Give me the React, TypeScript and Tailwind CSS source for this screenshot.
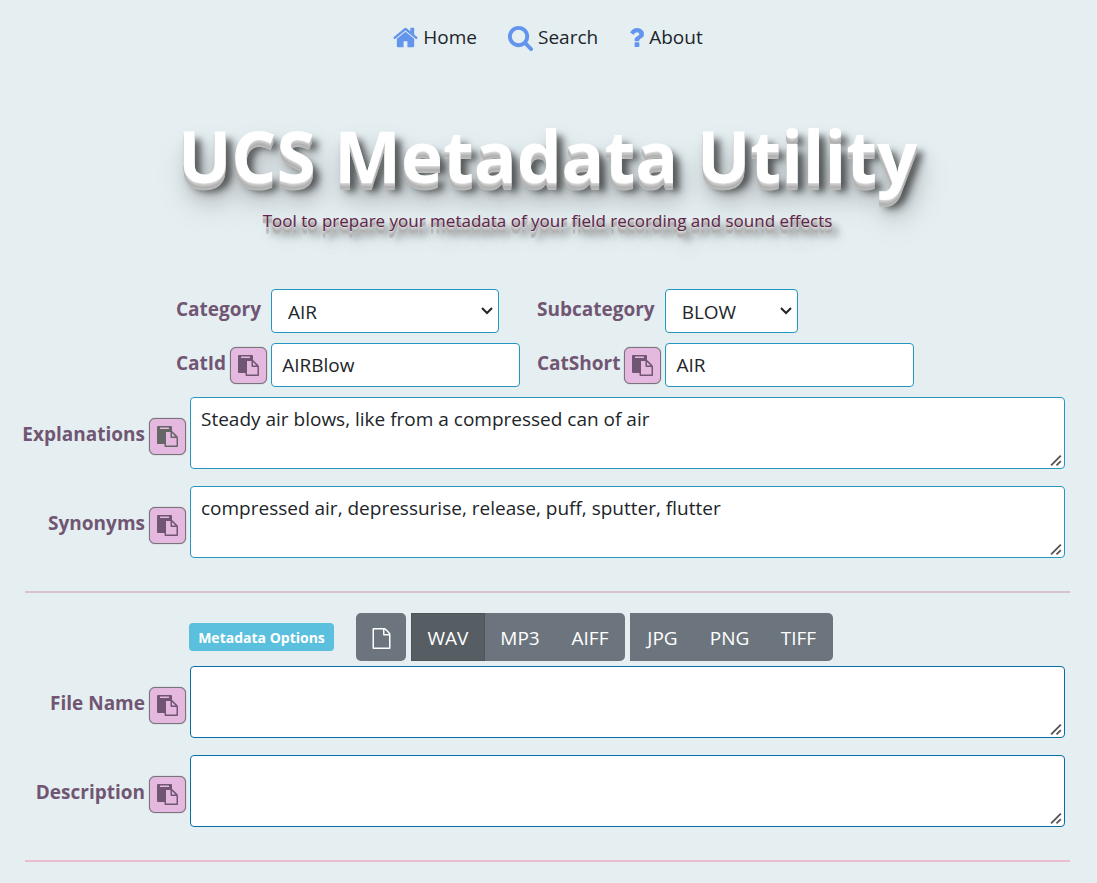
import type { ReactNode } from "react";

const ICONS = {
  home: "M1472 992v480q0 26-19 45t-45 19h-384v-384h-256v384h-384q-26 0-45-19t-19-45v-480q0-1 .5-3t.5-3l575-474 575 474q1 2 1 6zm223-69l-62 74q-8 9-21 11h-3q-13 0-21-7l-692-577-692 577q-12 8-24 7-13-2-21-11l-62-74q-8-10-7-23.5t11-21.5l719-599q32-26 76-26t76 26l244 204v-195q0-14 9-23t23-9h192q14 0 23 9t9 23v408l219 182q10 8 11 21.5t-7 23.5z",
  search:
    "M1216 832q0-185-131.5-316.5t-316.5-131.5-316.5 131.5-131.5 316.5 131.5 316.5 316.5 131.5 316.5-131.5 131.5-316.5zm512 832q0 52-38 90t-90 38q-54 0-90-38l-343-342q-179 124-399 124-143 0-273.5-55.5t-225-150-150-225-55.5-273.5 55.5-273.5 150-225 225-150 273.5-55.5 273.5 55.5 225 150 150 225 55.5 273.5q0 220-124 399l343 343q37 37 37 90z",
  question:
    "M1088 1256v240q0 16-12 28t-28 12h-240q-16 0-28-12t-12-28v-240q0-16 12-28t28-12h240q16 0 28 12t12 28zm316-600q0 54-15.5 101t-35 76.5-55 59.5-57.5 43.5-61 35.5q-41 23-68.5 65t-27.5 67q0 17-12 32.5t-28 15.5h-240q-15 0-25.5-18.5t-10.5-37.5v-45q0-83 65-156.5t143-108.5q59-27 84-56t25-76q0-42-46.5-74t-107.5-32q-65 0-108 29-35 25-107 115-13 16-31 16-12 0-25-8l-164-125q-13-10-15.5-25t5.5-28q160-266 464-266 80 0 161 31t146 83 106 127.5 41 158.5z",
  paste:
    "M768 1664h896v-640h-416q-40 0-68-28t-28-68v-416h-384v1152zm256-1440v-64q0-13-9.5-22.5t-22.5-9.5h-704q-13 0-22.5 9.5t-9.5 22.5v64q0 13 9.5 22.5t22.5 9.5h704q13 0 22.5-9.5t9.5-22.5zm256 672h299l-299-299v299zm512 128v672q0 40-28 68t-68 28h-960q-40 0-68-28t-28-68v-160h-544q-40 0-68-28t-28-68v-1344q0-40 28-68t68-28h1088q40 0 68 28t28 68v328q21 13 36 28l408 408q28 28 48 76t20 88z",
  file: "M1596 380q28 28 48 76t20 88v1152q0 40-28 68t-68 28h-1344q-40 0-68-28t-28-68v-1600q0-40 28-68t68-28h896q40 0 88 20t76 48zm-444-244v376h376q-10-29-22-41l-313-313q-12-12-41-22zm384 1528v-1024h-416q-40 0-68-28t-28-68v-416h-768v1536h1280z",
};

function Icon({ name, className, viewBox = "0 0 1792 1792" }: { name: keyof typeof ICONS; className: string; viewBox?: string }) {
  return (
    <svg viewBox={viewBox} className={className} fill="currentColor" aria-hidden="true">
      <path d={ICONS[name]} />
    </svg>
  );
}

function CopyButton({ label, gray }: { label: string; gray?: boolean }) {
  return (
    <button
      type="button"
      aria-label={`Copy ${label}`}
      className={`flex size-[37px] shrink-0 items-center justify-center rounded-md border border-[#77747a] bg-[#e5b8df] shadow-[0_0_1px_#77747a] ${gray ? "text-[#666]" : "text-[#715673]"}`}
    >
      <Icon name="paste" className="size-[21px]" />
    </button>
  );
}

const LABEL = "text-[19px] leading-[30px] font-bold text-[#715673]";
const FIELD = "rounded-[4px] border border-[#2596be] bg-white text-[#212529]";

function NavLink({ children, href }: { children: ReactNode; href: string }) {
  return (
    <a href={href} className="flex items-center gap-1 text-[#212529]">
      {children}
    </a>
  );
}

function SelectField({ id, label, value, size }: { id: string; label: string; value: string; size: string }) {
  return (
    <div className="flex items-start gap-[10px]">
      <label htmlFor={id} className={`${LABEL} pt-[5px]`}>
        {label}
      </label>
      <div className={`relative ${size}`}>
        <select id={id} className={`${FIELD} h-11 w-full appearance-none pt-[3px] pl-4`}>
          <option>{value}</option>
        </select>
        <svg viewBox="0 0 12 8" className="pointer-events-none absolute top-[18px] right-[6px] h-2 w-3" fill="none" stroke="#212529" strokeWidth="2" aria-hidden="true">
          <path d="M1 1l5 5 5-5" />
        </svg>
      </div>
    </div>
  );
}

function TextField({ id, label, value }: { id: string; label: string; value: string }) {
  return (
    <div className="flex items-start gap-1">
      <label htmlFor={id} className={`${LABEL} pt-[5px]`}>
        {label}
      </label>
      <div className="pt-[4px]">
        <CopyButton label={label} />
      </div>
      <input id={id} defaultValue={value} className={`${FIELD} h-11 min-w-0 grow px-[10px]`} />
    </div>
  );
}

function AreaField({ id, label, value, dark, gray }: { id: string; label: string; value?: string; dark?: boolean; gray?: boolean }) {
  return (
    <div className="flex items-center gap-1 pr-[5px]">
      <label htmlFor={id} className={`${LABEL} flex w-[120px] shrink-0 justify-end pt-[2px] whitespace-nowrap`}>
        {label}
      </label>
      <div className="pt-[6px]">
        <CopyButton label={label} gray={gray} />
      </div>
      <div className="relative flex min-w-0 grow">
        <textarea
          id={id}
          defaultValue={value}
          className={`h-[72px] w-full resize-y rounded-[4px] border bg-white px-[10px] py-[6px] leading-[30px] text-[#212529] ${dark ? "border-[#066da5]" : "border-[#2596be]"}`}
        />
        <svg
          viewBox="0 0 12 12"
          className="pointer-events-none absolute right-[2px] bottom-[2px] size-[13px] bg-white"
          fill="none"
          stroke="#555"
          strokeWidth="1.7"
          aria-hidden="true"
        >
          <path d="M1 10.5L10 1.5M6 10.5L10 6.5" />
        </svg>
      </div>
    </div>
  );
}

function FormatButton({ children, className, label }: { children: ReactNode; className: string; label?: string }) {
  return (
    <button type="button" aria-label={label} className={`flex h-12 items-center justify-center pt-[2px] text-white ${className}`}>
      {children}
    </button>
  );
}

export default function App() {
  return (
    <div className="min-h-screen bg-[#e5eef1] pr-[27px] pb-5 pl-[25px] font-['Open_Sans','Noto_Sans',sans-serif] text-[19px] text-[#212529]">
      <nav className="flex justify-center gap-[30px] pt-[23px] leading-[28px]">
        <NavLink href="#home">
          <Icon name="home" className="size-[27px] text-[#6495ed]" />
          <span>Home</span>
        </NavLink>
        <NavLink href="#search">
          <Icon name="search" className="size-[27px] text-[#6495ed]" />
          <span>Search</span>
        </NavLink>
        <NavLink href="#about">
          <Icon name="question" viewBox="320 0 1152 1792" className="h-[27px] w-[17px] text-[#6495ed]" />
          <span>About</span>
        </NavLink>
      </nav>

      <header className="mt-[57px] text-center [text-shadow:0_1px_0_#d8d8d8,0_2px_0_#c8c8c8,0_3px_0_#c0c0c0,0_4px_0_#b4b4b4,0_5px_0_#b0b0b0,0_6px_0_#b8b8b8,0_7px_0_#bbb,6px_8px_6px_rgba(16,16,16,0.5),6px_10px_10px_rgba(16,16,16,0.25),6px_15px_20px_rgba(16,16,16,0.2),6px_20px_35px_rgba(16,16,16,0.2)]">
        <h1 className="text-[71px] leading-[96px] font-bold text-white">UCS Metadata Utility</h1>
        <p className="mt-[5px] text-[17px] leading-[24px] text-[#5f2449]">Tool to prepare your metadata of your field recording and sound effects</p>
      </header>

      <main className="mt-14">
        <form>
          <div className="flex flex-wrap gap-x-[17px] pl-[151px]">
            <div className="flex w-[344px] flex-col gap-[10px]">
              <SelectField id="category" label="Category" value="AIR" size="w-[228px]" />
              <TextField id="catid" label="CatId" value="AIRBlow" />
            </div>
            <div className="flex w-[377px] flex-col gap-[10px]">
              <SelectField id="subcategory" label="Subcategory" value="BLOW" size="w-[133px]" />
              <TextField id="catshort" label="CatShort" value="AIR" />
            </div>
          </div>
          <div className="mt-[10px] flex flex-col gap-[17px]">
            <AreaField id="explanations" label="Explanations" value="Steady air blows, like from a compressed can of air" gray />
            <AreaField id="synonyms" label="Synonyms" value="compressed air, depressurise, release, puff, sputter, flutter" />
          </div>

          <hr className="mt-[33px] border-t-2 border-[#d8c4d0]" />

          <div className="mt-5 flex items-center pl-[164px]">
            <span className="mr-[22px] flex h-7 w-[145px] items-center justify-center rounded-[4px] bg-[#5bc0de] text-[14px] font-bold text-white">
              Metadata Options
            </span>
            <FormatButton label="File" className="mr-[5px] w-[50px] rounded-[5px] bg-[#6c757d]">
              <Icon name="file" className="size-[21px]" />
            </FormatButton>
            <FormatButton className="w-[74px] border border-[#4e555b] bg-[#565e64]">WAV</FormatButton>
            <FormatButton className="w-[70px] bg-[#6c757d]">MP3</FormatButton>
            <FormatButton className="mr-[5px] w-[70px] rounded-r-[5px] bg-[#6c757d]">AIFF</FormatButton>
            <FormatButton className="w-[65px] bg-[#6c757d]">JPG</FormatButton>
            <FormatButton className="w-[69px] bg-[#6c757d]">PNG</FormatButton>
            <FormatButton className="w-[69px] rounded-r-[5px] bg-[#6c757d]">TIFF</FormatButton>
          </div>

          <div className="mt-[5px] flex flex-col gap-[17px]">
            <AreaField id="filename" label="File Name" dark />
            <AreaField id="description" label="Description" dark />
          </div>

          <hr className="mt-[33px] border-t-2 border-[#ebbccb]" />
        </form>
      </main>
    </div>
  );
}
